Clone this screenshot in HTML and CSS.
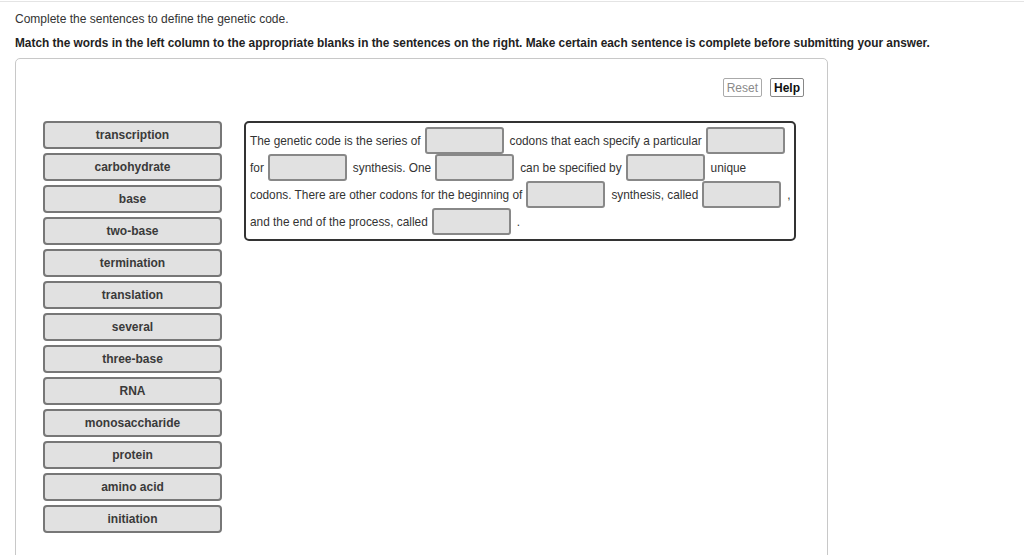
FILE: index.html
```html
<!DOCTYPE html>
<html>
<head>
<meta charset="utf-8">
<link rel="stylesheet" href="styles.css">
</head>
<body>
<div class="page">
  <p class="intro">Complete the sentences to define the genetic code.</p>
  <p class="instr">Match the words in the left column to the appropriate blanks in the sentences on the right. Make certain each sentence is complete before submitting your answer.</p>
  <div class="panel">
    <div class="toolbar">
      <button class="btn reset">Reset</button>
      <button class="btn help">Help</button>
    </div>
    <div class="work">
      <div class="words">
        <div class="word">transcription</div>
        <div class="word">carbohydrate</div>
        <div class="word">base</div>
        <div class="word">two-base</div>
        <div class="word">termination</div>
        <div class="word">translation</div>
        <div class="word">several</div>
        <div class="word">three-base</div>
        <div class="word">RNA</div>
        <div class="word">monosaccharide</div>
        <div class="word">protein</div>
        <div class="word">amino acid</div>
        <div class="word">initiation</div>
      </div>
      <div class="sentences">
        <div class="row">
          <span class="txt">The genetic code is the series of</span><span class="blank"></span>
          <span class="txt">codons that each specify a particular</span><span class="blank"></span>
        </div>
        <div class="row">
          <span class="txt">for</span><span class="blank"></span>
          <span class="txt">synthesis. One</span><span class="blank"></span>
          <span class="txt">can be specified by</span><span class="blank"></span>
          <span class="txt">unique</span>
        </div>
        <div class="row">
          <span class="txt">codons. There are other codons for the beginning of</span><span class="blank"></span>
          <span class="txt">synthesis, called</span><span class="blank"></span>
          <span class="txt">,</span>
        </div>
        <div class="row">
          <span class="txt">and the end of the process, called</span><span class="blank"></span>
          <span class="txt">.</span>
        </div>
      </div>
    </div>
  </div>
</div>
</body>
</html>
```
FILE: styles.css
```css
html, body {
  margin: 0;
  padding: 0;
  background: #fff;
}
body {
  font-family: "Liberation Sans", Arial, sans-serif;
  color: #333;
  border-top: 1px solid #e4e4e4;
  margin-top: 1px;
}
.page {
  padding: 9px 15px 0 15px;
}
.intro {
  margin: 0;
  font-size: 12px;
  line-height: 16px;
  color: #333;
}
.instr {
  margin: 8px 0 0 0;
  font-size: 11.85px;
  line-height: 16px;
  font-weight: bold;
  color: #222;
}
.panel {
  margin-top: 7px;
  width: 811px;
  height: 520px;
  border: 1px solid #c8c8c8;
  border-radius: 5px;
}
.toolbar {
  display: flex;
  justify-content: flex-end;
  gap: 8px;
  padding: 19px 23px 0 0;
}
.btn {
  font-family: "Liberation Sans", Arial, sans-serif;
  font-size: 12px;
  line-height: 14px;
  height: 19px;
  padding: 1px 3px;
  background: #fff;
  border: 1px solid #aaa;
  border-radius: 2px;
}
.reset {
  color: #8a8a8a;
}
.help {
  color: #111;
  font-weight: bold;
  border-color: #888;
}
.work {
  display: flex;
  gap: 22px;
  padding: 24px 0 0 27px;
}
.words {
  display: flex;
  flex-direction: column;
  gap: 4px;
  width: 179px;
}
.word {
  box-sizing: border-box;
  height: 28px;
  border: 2px solid #777;
  border-radius: 4px;
  background: #e1e1e1;
  font-size: 12px;
  font-weight: bold;
  color: #3a3a3a;
  display: flex;
  align-items: center;
  justify-content: center;
}
.sentences {
  box-sizing: border-box;
  width: 552px;
  height: 120px;
  border: 2px solid #333;
  border-radius: 5px;
  padding: 4px 0 0 3px;
  align-self: flex-start;
}
.row {
  display: flex;
  align-items: center;
  height: 27px;
}
.txt {
  font-size: 11.85px;
  color: #333;
  padding: 0 2px 0 1px;
  white-space: nowrap;
}
.blank {
  box-sizing: border-box;
  width: 79px;
  height: 27px;
  border: 2px solid #888;
  border-radius: 3px;
  background: #e1e1e1;
  margin: 0 5px 0 2px;
}
```
